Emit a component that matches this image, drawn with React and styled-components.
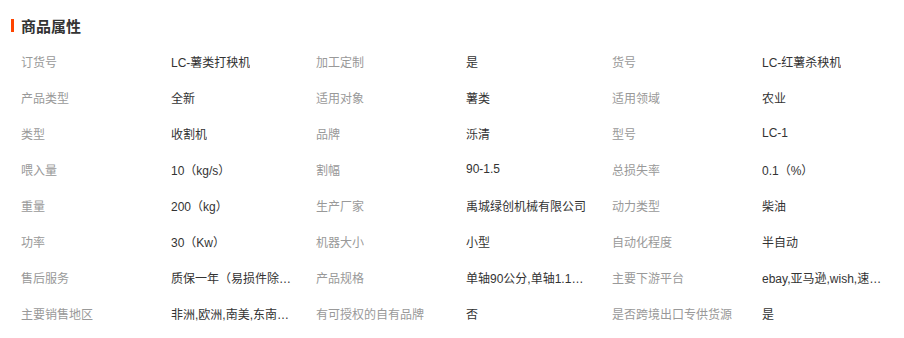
import React from "react";
import styled, { createGlobalStyle } from "styled-components";

const Global = createGlobalStyle`
  html, body { margin: 0; padding: 0; background: #fff; }
  body { font-family: "Liberation Sans", "Noto Sans CJK SC", sans-serif; }
`;

const Wrap = styled.div`
  width: 904px;
  height: 338px;
  background: #fff;
  padding-top: 16px;
  box-sizing: border-box;
`;

const Title = styled.h3`
  margin: 0;
  display: flex;
  align-items: center;
  gap: 7px;
  padding-left: 11px;
  height: 18px;
  font-size: 15px;
  font-weight: bold;
  color: #333;
  font-family: "Noto Sans CJK SC", sans-serif;
`;

const Mark = styled.span`
  width: 3px;
  height: 13px;
  background: #ff4400;
`;

const Grid = styled.div`
  display: grid;
  grid-template-columns: 150px 145px 150px 146px 150px 1fr;
  grid-auto-rows: 36px;
  padding-left: 21px;
  margin-top: 9px;
  font-size: 12px;
`;

const Cell = styled.div`
  display: flex;
  align-items: center;
  color: ${(p) => (p.$label ? "#999" : "#333")};
  min-width: 0;
`;

const Text = styled.span`
  max-width: ${(p) => (p.$label ? "140px" : "126px")};
  white-space: nowrap;
  overflow: hidden;
  text-overflow: ellipsis;
`;

const rows = [
  ["订货号", "LC-薯类打秧机", "加工定制", "是", "货号", "LC-红薯杀秧机"],
  ["产品类型", "全新", "适用对象", "薯类", "适用领域", "农业"],
  ["类型", "收割机", "品牌", "泺清", "型号", "LC-1"],
  ["喂入量", "10（kg/s）", "割幅", "90-1.5", "总损失率", "0.1（%）"],
  ["重量", "200（kg）", "生产厂家", "禹城绿创机械有限公司", "动力类型", "柴油"],
  ["功率", "30（Kw）", "机器大小", "小型", "自动化程度", "半自动"],
  ["售后服务", "质保一年（易损件除外）", "产品规格", "单轴90公分,单轴1.1米,双轴1.5米", "主要下游平台", "ebay,亚马逊,wish,速卖通"],
  ["主要销售地区", "非洲,欧洲,南美,东南亚,北美", "有可授权的自有品牌", "否", "是否跨境出口专供货源", "是"],
];

export default function App() {
  return (
    <Wrap>
      <Global />
      <Title>
        <Mark />
        商品属性
      </Title>
      <Grid>
        {rows.map((r, i) =>
          r.map((t, j) => (
            <Cell key={`${i}-${j}`} $label={j % 2 === 0}>
              <Text $label={j % 2 === 0} title={t}>{t}</Text>
            </Cell>
          ))
        )}
      </Grid>
    </Wrap>
  );
}
